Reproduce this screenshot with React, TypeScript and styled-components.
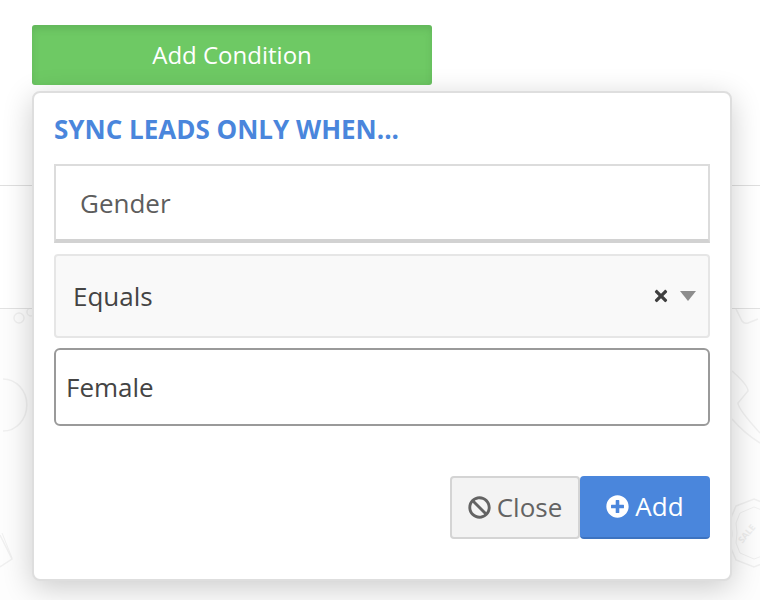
import React from 'react';
import styled, { createGlobalStyle } from 'styled-components';
import { FaBan, FaPlusCircle, FaTimes } from 'react-icons/fa';

const GlobalStyle = createGlobalStyle`
  html, body {
    margin: 0;
    padding: 0;
    background: #fff;
    overflow: hidden;
  }
  * {
    box-sizing: border-box;
  }
`;

// faint doodles behind the popover, only the edges show
const Wallpaper = () => (
  <WallpaperSvg viewBox="0 0 760 291" fill="none" stroke="#f0f0f0" strokeWidth="1.5">
    <circle cx="19" cy="9" r="5" />
    <circle cx="31" cy="3" r="4" />
    <path d="M3 70a22 24 0 0 1 0 52" />
    <path d="M0 226l12 24-12 8" />
    <path d="M2 224l10 25" strokeWidth="1" />
    <path d="M736 0l6 12q2 3 6 2l10-4" />
    <path d="M732 62q16 14 16 20l-10 12q0 6 22 30" />
    <path d="M732 110q12 14 28 24" />
    <path d="M736 197l18-7 10 4v60l-10 4-18-7-6-14 2-12-2-14z" />
    <path d="M740 204l14-6 8 3v46l-8 3-14-6-4-10 1-10-1-10z" strokeWidth="1" />
    <text x="735" y="229" transform="rotate(-50 745 224)" fontSize="9" fontWeight="700" stroke="none" fill="#eeeeee" fontFamily="'Open Sans', sans-serif">SALE</text>
  </WallpaperSvg>
);

export default function App() {
  return (
    <Page>
      <GlobalStyle />
      <TopRow>
        <AddConditionButton>Add Condition</AddConditionButton>
      </TopRow>
      <MiddleRow />
      <BottomRow>
        <Wallpaper />
      </BottomRow>

      <Popover>
        <Heading>SYNC LEADS ONLY WHEN...</Heading>
        <FieldBox>Gender</FieldBox>
        <SelectBox>
          <span>Equals</span>
          <SelectControls>
            <FaTimes size={18} color="#3f3f3f" />
            <Caret />
          </SelectControls>
        </SelectBox>
        <ValueInput readOnly value="Female" />
        <Actions>
          <CloseButton>
            <FaBan size={23} />
            <ButtonLabel>Close</ButtonLabel>
          </CloseButton>
          <AddButton>
            <FaPlusCircle size={23} />
            <ButtonLabel>Add</ButtonLabel>
          </AddButton>
        </Actions>
      </Popover>
    </Page>
  );
}

const Page = styled.div`
  position: relative;
  width: 760px;
  height: 600px;
  overflow: hidden;
  font-family: "Open Sans", "Liberation Sans", sans-serif;
`;

const TopRow = styled.div`
  height: 186px;
  padding: 25px 0 0 32px;
  border-bottom: 1px solid #dfdfdf;
`;

const MiddleRow = styled.div`
  height: 123px;
  border-bottom: 1px solid #e2e2e2;
`;

const BottomRow = styled.div`
  height: 291px;
  background: #fdfdfd;
`;

const WallpaperSvg = styled.svg`
  display: block;
  width: 760px;
  height: 291px;
`;

const AddConditionButton = styled.button`
  display: block;
  width: 400px;
  height: 60px;
  padding: 0 0 2px;
  border: 0;
  border-radius: 3px;
  background: #6ec964;
  box-shadow: inset 0 4px 7px rgba(60, 120, 60, 0.22);
  color: #fff;
  font-family: inherit;
  font-size: 24px;
  text-align: center;
`;

const Popover = styled.div`
  position: absolute;
  top: 91px;
  left: 32px;
  width: 700px;
  height: 490px;
  padding: 20px 20px 0;
  background: #fff;
  border: 2px solid #dedede;
  border-radius: 8px;
  box-shadow: 0 7px 30px rgba(0, 0, 0, 0.2);
`;

const Heading = styled.h3`
  margin: 0 0 18px;
  height: 33px;
  color: #4a86dc;
  font-size: 26px;
  font-weight: 700;
  line-height: 33px;
  white-space: nowrap;
`;

const FieldBox = styled.div`
  width: 656px;
  height: 79px;
  padding-left: 24px;
  display: flex;
  align-items: center;
  border: 2px solid #dcdcdc;
  border-bottom: 4px solid #d2d2d2;
  color: #5d5d5d;
  font-size: 26px;
`;

const SelectBox = styled.div`
  width: 656px;
  height: 84px;
  margin-top: 11px;
  padding: 0 12px 0 17px;
  display: flex;
  align-items: center;
  justify-content: space-between;
  background: #f9f9f9;
  border: 2px solid #e6e6e6;
  border-radius: 4px;
  color: #444;
  font-size: 26px;
`;

const SelectControls = styled.div`
  display: flex;
  align-items: center;
  gap: 10px;
`;

const Caret = styled.i`
  width: 0;
  height: 0;
  border-left: 8px solid transparent;
  border-right: 8px solid transparent;
  border-top: 10px solid #8d8d8d;
`;

const ValueInput = styled.input`
  display: block;
  width: 656px;
  height: 78px;
  margin-top: 10px;
  padding: 0 10px;
  background: #fff;
  border: 2px solid #9a9a9a;
  border-radius: 6px;
  outline: none;
  color: #444;
  font-family: inherit;
  font-size: 26px;
`;

const Actions = styled.div`
  width: 656px;
  margin-top: 50px;
  display: flex;
  justify-content: flex-end;
`;

const ActionButton = styled.button`
  width: 130px;
  height: 63px;
  padding: 0;
  display: flex;
  align-items: center;
  justify-content: center;
  gap: 6px;
  border-radius: 4px;
  font-family: inherit;
  font-size: 26px;
`;

const ButtonLabel = styled.span`
  margin-top: -2px;
`;

const CloseButton = styled(ActionButton)`
  background: #f3f3f3;
  border: 2px solid #d4d4d4;
  color: #636363;
`;

const AddButton = styled(ActionButton)`
  background: #4a86dc;
  border: 0;
  border-bottom: 2px solid #3d73c0;
  color: #fff;
`;
